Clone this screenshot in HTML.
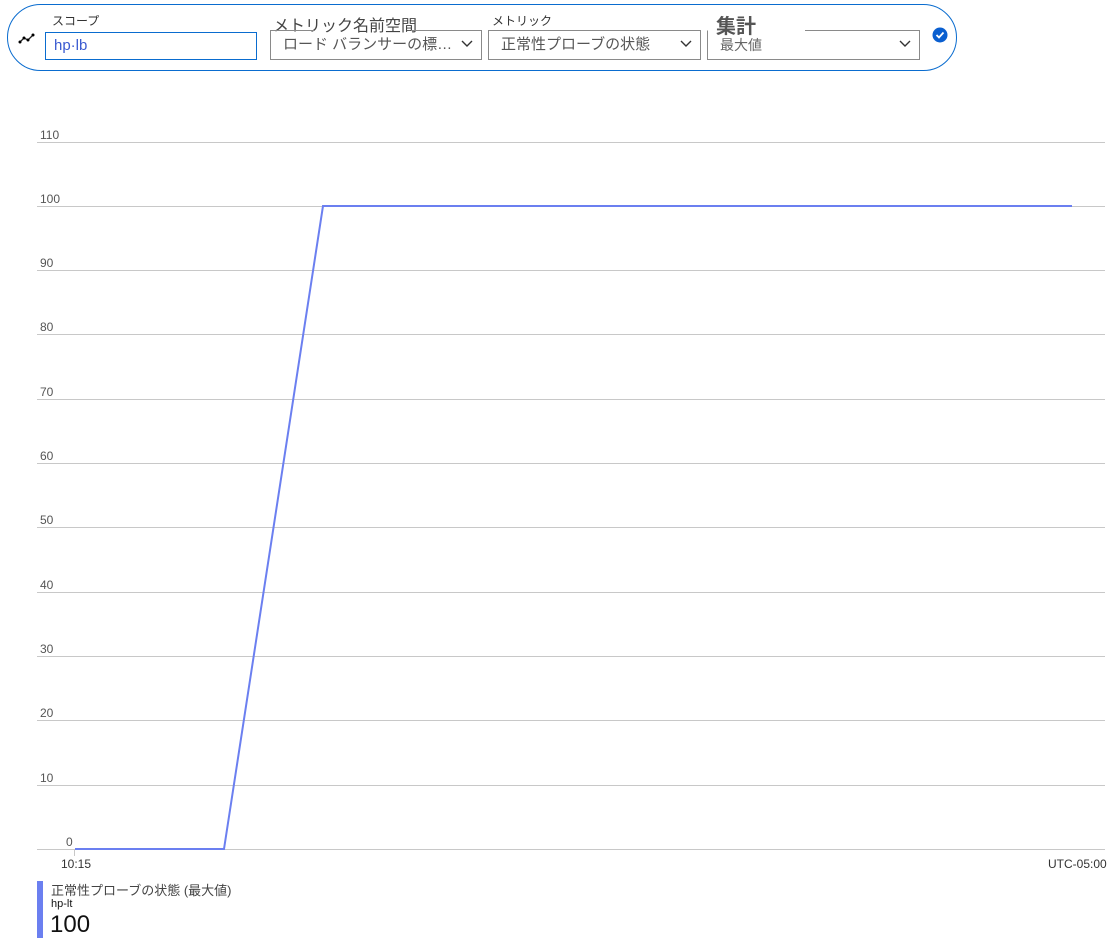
<!DOCTYPE html><html><head><meta charset="utf-8"><style>
body{margin:0;width:1110px;height:945px;background:#fff;font-family:"Liberation Sans","Noto Sans CJK JP",sans-serif;position:relative;overflow:hidden}
.a{position:absolute;white-space:nowrap}
.box{position:absolute;border:1px solid #8a8a8a;height:30px;box-sizing:border-box;font-size:15px;color:#555;line-height:28px;padding-left:12px}
.chev{position:absolute;right:8px;top:9px}
.lbl{font-size:12px;color:#333}
.yl{position:absolute;left:40px;font-size:12px;color:#555}
</style></head><body>
<div class="a" style="left:7px;top:4px;width:950px;height:67px;border:1.5px solid #0a6ccf;border-radius:34px;box-sizing:border-box"></div>
<svg class="a" style="left:18px;top:33px" width="18" height="12"><polyline points="2,9 6,5 10,7 15,2" fill="none" stroke="#222" stroke-width="1.3"/><circle cx="2" cy="9" r="1.5"/><circle cx="6" cy="5" r="1.5"/><circle cx="10" cy="7" r="1.5"/><circle cx="15" cy="2" r="1.5"/></svg>
<div class="a lbl" style="left:52px;top:12px">スコープ</div>
<div class="box" style="left:45px;top:32px;width:212px;height:28px;border-color:#0a6ccf;color:#3a5ad0;padding-left:8px;line-height:26px">hp·lb</div>
<div class="a" style="left:273px;top:12px;font-size:16px;color:#444">メトリック名前空間</div>
<div class="box" style="left:270px;top:30px;width:212px;border-top-color:transparent">ロード バランサーの標…<svg class="chev" width="12" height="8"><polyline points="1,1 6,6 11,1" fill="none" stroke="#333" stroke-width="1.4"/></svg></div>
<div class="a" style="left:270px;top:30px;width:45px;border-top:1px solid #8a8a8a"></div>
<div class="a" style="left:411px;top:30px;width:71px;border-top:1px solid #8a8a8a"></div>
<div class="a lbl" style="left:492px;top:12px">メトリック</div>
<div class="box" style="left:488px;top:30px;width:213px">正常性プローブの状態<svg class="chev" width="12" height="8"><polyline points="1,1 6,6 11,1" fill="none" stroke="#333" stroke-width="1.4"/></svg></div>
<div class="a" style="left:716px;top:10px;font-size:20px;font-weight:bold;color:#555">集計</div>
<div class="box" style="left:707px;top:30px;width:213px;border-top-color:transparent;font-size:14px;color:#666">最大値<svg class="chev" width="12" height="8"><polyline points="1,1 6,6 11,1" fill="none" stroke="#333" stroke-width="1.4"/></svg></div>
<div class="a" style="left:805px;top:30px;width:115px;border-top:1px solid #8a8a8a"></div>
<svg class="a" style="left:932px;top:27px" width="16" height="16"><circle cx="8" cy="8" r="7.5" fill="#0a5fd0"/><polyline points="4.5,8 7,10.5 11.5,5.5" fill="none" stroke="#fff" stroke-width="1.8"/></svg>
<svg class="a" style="left:0;top:0" width="1110" height="945">
<g stroke="#c8c8c8" stroke-width="1">
<line x1="37" x2="1105" y1="142.5" y2="142.5"/><line x1="37" x2="1105" y1="206.5" y2="206.5"/><line x1="37" x2="1105" y1="270.5" y2="270.5"/><line x1="37" x2="1105" y1="334.5" y2="334.5"/><line x1="37" x2="1105" y1="399.5" y2="399.5"/><line x1="37" x2="1105" y1="463.5" y2="463.5"/><line x1="37" x2="1105" y1="527.5" y2="527.5"/><line x1="37" x2="1105" y1="592.5" y2="592.5"/><line x1="37" x2="1105" y1="656.5" y2="656.5"/><line x1="37" x2="1105" y1="720.5" y2="720.5"/><line x1="37" x2="1105" y1="785.5" y2="785.5"/><line x1="37" x2="1105" y1="849.5" y2="849.5"/>
<line x1="74.5" x2="74.5" y1="849" y2="856"/></g>
<polyline points="75,849 224,849 323,206 1072,206" fill="none" stroke="#6b7ff0" stroke-width="2"/>
</svg>
<div class="yl" style="top:128px">110</div><div class="yl" style="top:192px">100</div><div class="yl" style="top:256px">90</div><div class="yl" style="top:320px">80</div><div class="yl" style="top:385px">70</div><div class="yl" style="top:449px">60</div><div class="yl" style="top:513px">50</div><div class="yl" style="top:578px">40</div><div class="yl" style="top:642px">30</div><div class="yl" style="top:706px">20</div><div class="yl" style="top:771px">10</div><div class="yl" style="top:835px;left:66px">0</div>
<div class="a" style="left:61px;top:857px;font-size:12px;color:#333">10:15</div>
<div class="a" style="left:1048px;top:857px;font-size:12px;color:#333">UTC-05:00</div>
<div class="a" style="left:37px;top:881px;width:6px;height:57px;background:#6b7ff0"></div>
<div class="a" style="left:51px;top:880px;font-size:13px;color:#444">正常性プローブの状態 (最大値)</div>
<div class="a" style="left:51px;top:898px;font-size:11px;color:#111">hp-lt</div>
<div class="a" style="left:50px;top:911px;font-size:24px;color:#111">100</div>
</body></html>
